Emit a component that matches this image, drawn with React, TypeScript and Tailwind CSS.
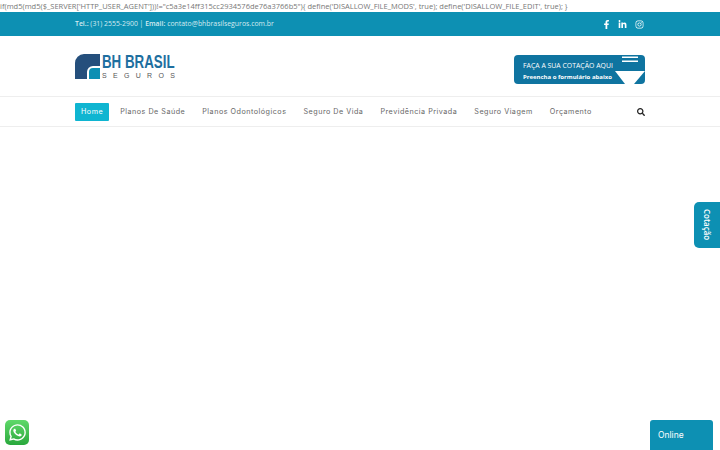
import { FaFacebookF, FaLinkedinIn, FaInstagram, FaSearch, FaWhatsapp } from "react-icons/fa";

const menu = ["Planos De Saúde", "Planos Odontológicos", "Seguro De Vida", "Previdência Privada", "Seguro Viagem", "Orçamento"];

const Logo = () => (
  <div className="flex items-center gap-[2px] h-[25px] mt-[1px]">
    <svg width="25" height="25" viewBox="0 0 25 25">
      <path d="M0 25V9a9 9 0 0 1 9-9h16v12H18a6 6 0 0 0-6 6v7z" fill="#254f7c" />
      <path d="M14 25v-7a4 4 0 0 1 4-4h7v11z" fill="#0d8fb3" />
    </svg>
    <div className="flex flex-col w-[73px] pt-[1px] font-['Liberation_Sans',sans-serif]">
      <span className="text-[18px] leading-[15px] font-bold text-[#1e6f9f] scale-x-[0.74] origin-left whitespace-nowrap">BH BRASIL</span>
      <span className="mt-[2px] text-[7px] leading-[8px] tracking-[6.3px] text-[#555] whitespace-nowrap">SEGUROS</span>
    </div>
  </div>
);

const Banner = () => (
  <div className="relative mt-[7px] w-[131px] h-[29px] bg-[#0f74a0] rounded-[4px] pl-[9px] pt-[6px] font-['Open_Sans',sans-serif] text-white overflow-hidden">
    <div className="text-[6.9px] leading-[10.5px] whitespace-nowrap">FAÇA A SUA COTAÇÃO AQUI</div>
    <div className="text-[6px] leading-[10.5px] font-bold whitespace-nowrap">Preencha o formulário abaixo</div>
    <svg className="absolute right-0 top-0" width="32" height="29" viewBox="0 0 32 29">
      <rect x="9" y="1.5" width="16" height="1.5" fill="#fff" />
      <rect x="9" y="5.5" width="16" height="1.5" fill="#fff" />
      <path d="M2 16H32L21 29H12z" fill="#fff" />
    </svg>
  </div>
);

export default function App() {
  return (
    <div className="relative w-[720px] h-[450px] overflow-hidden bg-white font-['Open_Sans',sans-serif]">
      <div className="h-[12px] text-[7.5px] leading-[12px] text-[#777] whitespace-nowrap">
        {`if(md5(md5($_SERVER['HTTP_USER_AGENT']))!="c5a3e14ff315cc2934576de76a3766b5"){ define('DISALLOW_FILE_MODS', true); define('DISALLOW_FILE_EDIT', true); }`}
      </div>

      <div className="h-[24px] bg-[#0d90b3]">
        <div className="w-[570px] mx-auto h-full flex items-center justify-between text-[6.9px] text-[#d5ebf1]">
          <div className="pt-[1px]">
            <b className="font-semibold">Tel.:</b> (31) 2555-2900 | <b className="font-semibold">Email:</b> contato@bhbrasilseguros.com.br
          </div>
          <div className="flex items-center gap-[7.5px] pr-[1.5px] text-white">
            <FaFacebookF size={9} />
            <FaLinkedinIn size={9} />
            <FaInstagram size={9} />
          </div>
        </div>
      </div>

      <div className="h-[61px] border-b border-[#eee]">
        <div className="w-[570px] mx-auto h-full flex items-center justify-between">
          <Logo />
          <Banner />
        </div>
      </div>

      <div className="h-[30px] border-b border-[#eee]">
        <div className="w-[570px] mx-auto h-full flex items-center font-['Inter',sans-serif] text-[7.2px] tracking-[0.5px] text-[#666]">
          <span className="h-[18px] px-[6px] pt-[1px] flex items-center bg-[#0fb5d1] text-white rounded-[1px] mr-[12px]">Home</span>
          <div className="flex gap-[17px] pt-[1px] -ml-[1px]">
            {menu.map((m) => (
              <span key={m} className="whitespace-nowrap">{m}</span>
            ))}
          </div>
          <FaSearch size={8} className="ml-auto text-[#222]" />
        </div>
      </div>

      <div className="absolute right-0 top-[202px] w-[26px] h-[46px] bg-[#0d90b3] rounded-l-[5px] flex items-center justify-center">
        <span className="[writing-mode:vertical-rl] text-[8px] font-semibold text-white">Cotação</span>
      </div>

      <div className="absolute left-[5px] top-[420px] w-[24px] h-[25px] rounded-[5px] bg-gradient-to-b from-[#5fd96a] to-[#28a83c] flex items-center justify-center text-white">
        <FaWhatsapp size={19} />
      </div>

      <div className="absolute left-[650px] top-[420px] w-[63px] h-[30px] bg-[#0d90b3] rounded-t-[3px] pl-[8px] pt-[9px] text-[8.5px] leading-[12px] font-['Inter',sans-serif] text-white">
        Online
      </div>
    </div>
  );
}
